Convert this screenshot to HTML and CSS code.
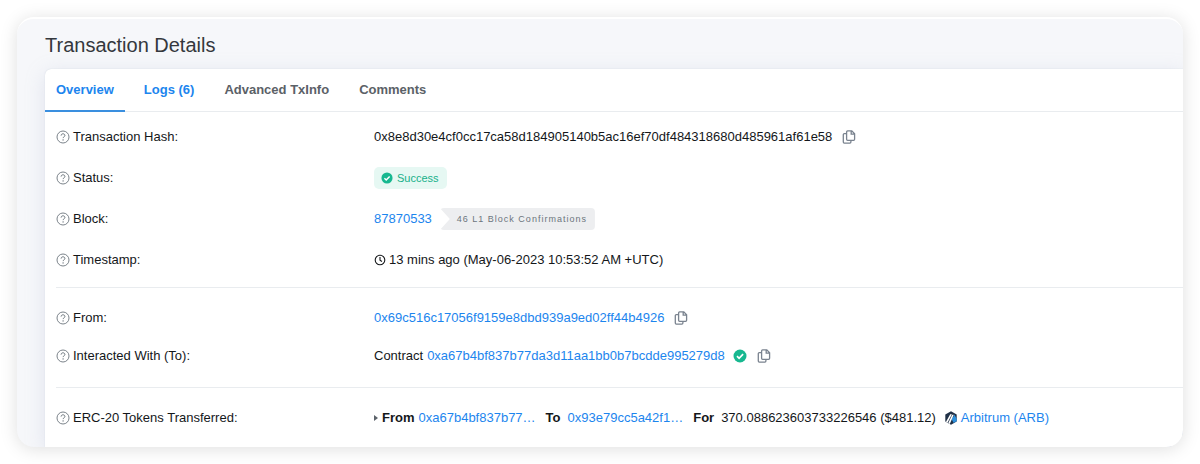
FILE: index.html
```html
<!DOCTYPE html>
<html lang="en">
<head>
    <meta charset="UTF-8">
    <meta name="viewport" content="width=device-width, initial-scale=1">
    <title>Transaction Details</title>
    <link rel="stylesheet" href="styles.css">
</head>
<body>
<!-- shared icons -->
<svg class="sprite" aria-hidden="true">
    <symbol id="help" viewBox="0 0 14 14">
        <circle cx="7" cy="7" r="6" fill="none" stroke="currentColor" stroke-width=".9"/>
        <path d="M5.1 5.6c0-1.1.8-1.8 1.9-1.8s1.9.7 1.9 1.7c0 1.3-1.8 1.3-1.8 2.6" fill="none" stroke="currentColor"/>
        <circle cx="7.1" cy="9.9" r=".7" fill="currentColor"/>
    </symbol>
    <symbol id="copy" viewBox="0 0 14 14">
        <path d="M5.6.9h4.2L12.6 3.7v5.6a1 1 0 0 1-1 1h-6a1 1 0 0 1-1-1V1.9a1 1 0 0 1 1-1zM9.2.9v3.3h3.4M4.6 3.6H2.3a1 1 0 0 0-1 1v7.5a1 1 0 0 0 1 1h5.6a1 1 0 0 0 1-1v-1.8" fill="none" stroke="currentColor" stroke-width="1.3"/>
    </symbol>
    <symbol id="check" viewBox="0 0 14 14">
        <circle cx="7" cy="7" r="6.5" fill="#17b890"/>
        <path d="M4 7.2l2.1 2.1 4-4.1" fill="none" stroke="#fff" stroke-width="1.7"/>
    </symbol>
</svg>

<main class="page">
    <h1>Transaction Details</h1>
    <div class="card">
        <nav class="tabs">
            <a class="tab active" href="#overview">Overview</a>
            <a class="tab link" href="#logs">Logs (6)</a>
            <a class="tab" href="#txinfo">Advanced TxInfo</a>
            <a class="tab" href="#comments">Comments</a>
        </nav>
        <div class="details" id="overview">
            <dl class="group">
                <div class="row">
                    <dt><svg class="icon"><use href="#help"/></svg>Transaction Hash:</dt>
                    <dd>0x8e8d30e4cf0cc17ca58d184905140b5ac16ef70df484318680d485961af61e58
                        <button class="copy" type="button" aria-label="Copy"><svg class="icon"><use href="#copy"/></svg></button></dd>
                </div>
                <div class="row">
                    <dt><svg class="icon"><use href="#help"/></svg>Status:</dt>
                    <dd><span class="status"><svg class="icon-sm"><use href="#check"/></svg>Success</span></dd>
                </div>
                <div class="row">
                    <dt><svg class="icon"><use href="#help"/></svg>Block:</dt>
                    <dd><a href="#block">87870533</a><span class="confirmations">46 L1 Block Confirmations</span></dd>
                </div>
                <div class="row">
                    <dt><svg class="icon"><use href="#help"/></svg>Timestamp:</dt>
                    <dd>
                        <svg class="clock" viewBox="0 0 12 12"><circle cx="6" cy="6" r="4.8" fill="none" stroke="currentColor" stroke-width="1.1"/><path d="M6 3v3.2l2 1.3" fill="none" stroke="currentColor" stroke-width="1.1"/></svg>
                        13 mins ago (May-06-2023 10:53:52 AM +UTC)
                    </dd>
                </div>
            </dl>
            <dl class="group parties">
                <div class="row">
                    <dt><svg class="icon"><use href="#help"/></svg>From:</dt>
                    <dd><a href="#from">0x69c516c17056f9159e8dbd939a9ed02ff44b4926</a>
                        <button class="copy" type="button" aria-label="Copy"><svg class="icon"><use href="#copy"/></svg></button></dd>
                </div>
                <div class="row">
                    <dt><svg class="icon"><use href="#help"/></svg>Interacted With (To):</dt>
                    <dd><span class="kind">Contract</span><a href="#contract">0xa67b4bf837b77da3d11aa1bb0b7bcdde995279d8</a>
                        <svg class="icon verified"><use href="#check"/></svg>
                        <button class="copy" type="button" aria-label="Copy"><svg class="icon"><use href="#copy"/></svg></button></dd>
                </div>
            </dl>
            <dl class="group tokens">
                <div class="row">
                    <dt><svg class="icon"><use href="#help"/></svg>ERC-20 Tokens Transferred:</dt>
                    <dd>
                        <svg class="caret" viewBox="0 0 4 6"><path d="M0 0l4 3-4 3z" fill="#5c636a"/></svg>
                        <span class="part"><strong>From</strong><a href="#sender">0xa67b4bf837b77…</a></span>
                        <span class="part to"><strong>To</strong><a href="#receiver">0x93e79cc5a42f1…</a></span>
                        <span class="part to"><strong>For</strong><span>370.088623603733226546 ($481.12)</span></span>
                        <svg class="token" viewBox="0 0 12 14">
                            <path d="M6 .3l5.7 3.2v7L6 13.7.3 10.5v-7z" fill="#213147"/>
                            <path d="M7.9 5.6l3 4.9L8.7 12 6.6 8.3zM9.2 3.6l2.5 3.8v2.8l-1 .5L8.2 6.2z" fill="#2d8fdc"/>
                            <path d="M5.2 3.2h1.7L2.5 11.7l-1.5-.9zM7.2 3.8h1.5L4.8 12.9l-1.5-.8z" fill="#fff"/>
                        </svg>
                        <a href="#token">Arbitrum (ARB)</a>
                    </dd>
                </div>
            </dl>
        </div>
    </div>
</main>
</body>
</html>
```
FILE: styles.css
```css
* {
    box-sizing: border-box;
}
body {
    margin: 0;
    padding: 17px;
    background-color: #fff;
    color: #14171a;
    font-family: "Liberation Sans", Arial, sans-serif;
    font-size: 13px;
    line-height: 20px;
}
a {
    color: #1c85ee;
    text-decoration: none;
}
dl, dd {
    margin: 0;
}
.sprite {
    display: none;
}
.page {
    padding: 14px 0 0 28px;
    overflow: hidden;
    background-color: #f6f7fa;
    border-top: 2px solid #fff;
    border-radius: 17px;
    box-shadow: 0 2px 18px rgba(0, 0, 0, 0.13);
}
h1 {
    margin: 0 0 12px;
    color: #34383d;
    font-size: 20px;
    font-weight: normal;
    line-height: 24px;
}
.card {
    background-color: #fff;
    border-top-left-radius: 6px;
    box-shadow: 0 0 1px #c3cad8, 0 4px 20px rgba(160, 172, 205, 0.25);
}
.tabs {
    display: flex;
    gap: 8px;
    border-bottom: 1px solid #e9ecef;
}
.tab {
    padding: 11px 11px 10px;
    margin-bottom: -1px;
    border-bottom: 2px solid transparent;
    color: #5b6167;
    font-weight: bold;
}
.tab.link {
    color: #1c85ee;
}
.tab.active {
    color: #1c85ee;
    border-bottom-color: #3a8fdf;
}
.details {
    padding-left: 11px;
}
.group {
    display: grid;
    gap: 17px;
    padding: 13px 0 15px;
    border-bottom: 1px solid #e9ecef;
}
.group.parties {
    gap: 14px;
    padding: 18px 0 19px;
}
.group.tokens {
    padding: 18px 0 17px;
    border-bottom: none;
}
.row {
    display: grid;
    grid-template-columns: 318px 1fr;
}
dt, dd {
    display: flex;
    align-items: center;
    min-height: 24px;
}
dt {
    gap: 3px;
}
dt .icon {
    color: #6c757d;
}
.icon {
    flex: none;
    width: 14px;
    height: 14px;
}
.icon-sm {
    width: 12px;
    height: 12px;
}
.copy {
    display: flex;
    margin-left: 10px;
    padding: 0;
    border: none;
    background: none;
    color: #7a838f;
    cursor: pointer;
}
.status {
    display: flex;
    align-items: center;
    gap: 4px;
    padding: 1px 8px 1px 7px;
    border-radius: 5px;
    background-color: #e6f8f3;
    color: #17b08a;
    font-size: 11px;
}
.confirmations {
    margin-left: 8px;
    padding: 1px 8px 1px 17px;
    border-radius: 4px;
    background-color: #edeef0;
    color: #6c757d;
    clip-path: polygon(0 0, 100% 0, 100% 100%, 0 100%, 10px 50%);
    font-size: 9px;
    letter-spacing: 1px;
}
.clock {
    width: 12px;
    height: 12px;
    margin-right: 3px;
}
.kind {
    margin-right: 4px;
}
.verified {
    margin-left: 8px;
}
.caret {
    width: 4px;
    height: 6px;
    margin-right: 4px;
}
.part {
    display: flex;
    gap: 4px;
}
.part.to {
    gap: 7px;
    margin-left: 10px;
}
.token {
    width: 12px;
    height: 14px;
    margin: 0 4px 0 9px;
}
```
